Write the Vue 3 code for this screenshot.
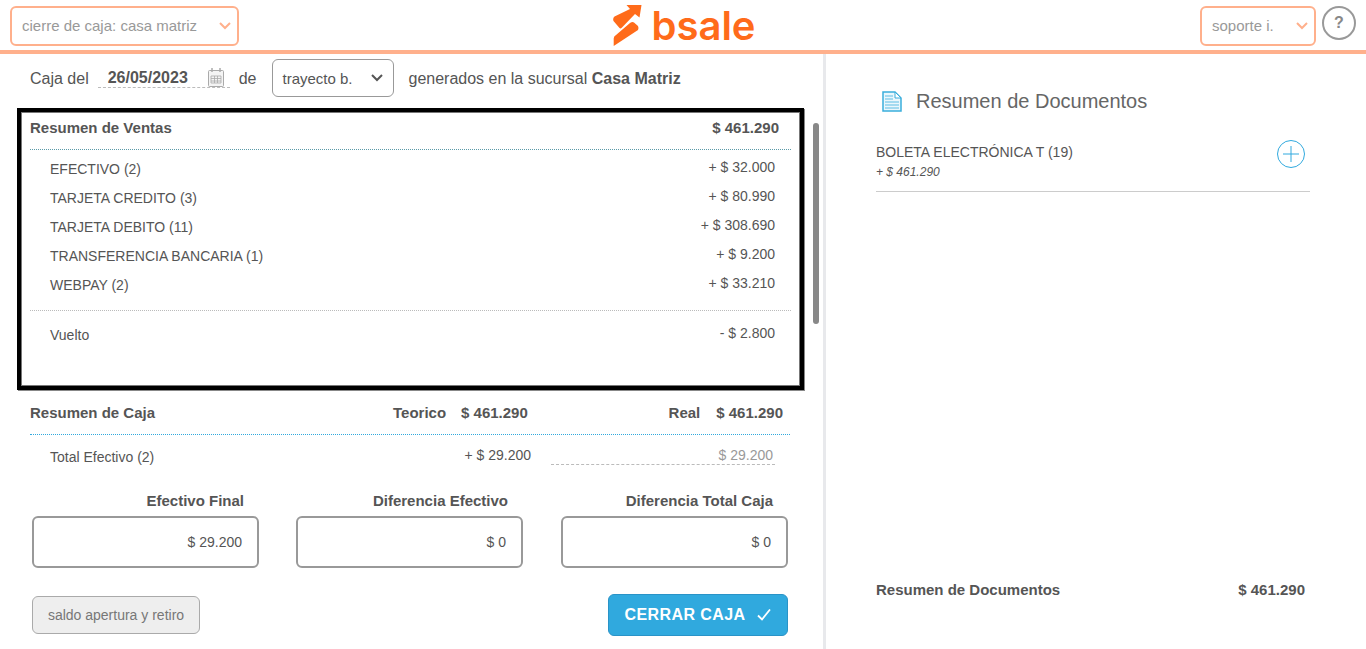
<script setup>
const ventas = [
  { name: 'EFECTIVO (2)', value: '+ $ 32.000' },
  { name: 'TARJETA CREDITO (3)', value: '+ $ 80.990' },
  { name: 'TARJETA DEBITO (11)', value: '+ $ 308.690' },
  { name: 'TRANSFERENCIA BANCARIA (1)', value: '+ $ 9.200' },
  { name: 'WEBPAY (2)', value: '+ $ 33.210' },
]

const totales = [
  { label: 'Efectivo Final', value: '$ 29.200' },
  { label: 'Diferencia Efectivo', value: '$ 0' },
  { label: 'Diferencia Total Caja', value: '$ 0' },
]
</script>

<template>
  <div class="page">
    <header class="topbar">
      <div class="top-select wide">
        <span>cierre de caja: casa matriz</span>
        <svg class="chev" width="12" height="8" viewBox="0 0 12 8"><path d="M1 1l5 5 5-5" fill="none" stroke="#ffb08c" stroke-width="2"/></svg>
      </div>
      <div class="logo">
        <svg class="logo-mark" width="30" height="42" viewBox="0 0 30 42">
          <path d="M13.500 0H28.500L26.500 12.500 22 9 9 22.500Q7.500 24 6.500 23L.5 16Q-.5 13 1.500 11.500L17 4Z" fill="#ff6b1a"/>
          <path d="M17 18Q19.500 16.500 21 17.500L25 21Q26 23 25 25L.7 41V33.500Q.7 31 3 30Z" fill="#ff6b1a"/>
        </svg>
        <span class="logo-text">bsale</span>
      </div>
      <div class="top-right">
        <div class="top-select narrow">
          <span>soporte i.</span>
          <svg class="chev" width="12" height="8" viewBox="0 0 12 8"><path d="M1 1l5 5 5-5" fill="none" stroke="#ffb08c" stroke-width="2"/></svg>
        </div>
        <div class="help">?</div>
      </div>
    </header>

    <div class="content">
      <main class="left">
        <div class="thumb"></div>
        <div class="filter">
          <span>Caja del</span>
          <div class="date">
            <b>26/05/2023</b>
            <svg width="16" height="19" viewBox="0 0 16 19">
              <rect x=".5" y="2.500" width="15" height="16" rx="1" fill="#f4f4f4" stroke="#aaa"/>
              <path d="M4 0v4M12 0v4" stroke="#aaa" stroke-width="1.500"/>
              <path d="M3 8h10v7H3zM3 10.500h10M3 13h10M6.500 8v7M9.500 8v7" fill="none" stroke="#aaa" stroke-width=".8"/>
            </svg>
          </div>
          <span class="de">de</span>
          <div class="filter-select">
            <span>trayecto b.</span>
            <svg width="12" height="8" viewBox="0 0 12 8"><path d="M1 1l5 5 5-5" fill="none" stroke="#555" stroke-width="2"/></svg>
          </div>
          <span class="sucursal">generados en la sucursal <b>Casa Matriz</b></span>
        </div>

        <section class="ventas">
          <div class="ventas-head">
            <b>Resumen de Ventas</b>
            <b>$ 461.290</b>
          </div>
          <div v-for="v in ventas" :key="v.name" class="row">
            <span class="row-name">{{ v.name }}</span>
            <span class="row-value">{{ v.value }}</span>
          </div>
          <div class="row vuelto">
            <span class="row-name">Vuelto</span>
            <span class="row-value">- $ 2.800</span>
          </div>
        </section>

        <section class="caja">
          <div class="caja-head">
            <b class="caja-title">Resumen de Caja</b>
            <b class="teorico">Teorico</b>
            <b>$ 461.290</b>
            <b class="real">Real</b>
            <b>$ 461.290</b>
          </div>
          <div class="caja-row">
            <span class="caja-name">Total Efectivo (2)</span>
            <span class="caja-teorico">+ $ 29.200</span>
            <span class="caja-real">$ 29.200</span>
          </div>
        </section>

        <div class="totales">
          <div v-for="t in totales" :key="t.label" class="total">
            <b>{{ t.label }}</b>
            <div class="total-box">{{ t.value }}</div>
          </div>
        </div>

        <div class="actions">
          <button class="btn-saldo">saldo apertura y retiro</button>
          <button class="btn-cerrar">
            CERRAR CAJA
            <svg width="14" height="12" viewBox="0 0 14 12"><path d="M1 6.500l4 4 8-10" fill="none" stroke="#fff" stroke-width="1.800"/></svg>
          </button>
        </div>
      </main>

      <aside class="right">
        <div class="right-title">
          <svg width="20" height="21" viewBox="0 0 20 21">
            <path d="M1 1h12l6 6v13H1z" fill="#eaf7fc" stroke="#3aaedc" stroke-width="1.500"/>
            <path d="M13 1v6h6z" fill="#fff" stroke="#3aaedc"/>
            <path d="M3 5h8M3 8h8M3 11h14M3 14h14M3 17h14" stroke="#5cbde4" stroke-width="1.200"/>
          </svg>
          <span>Resumen de Documentos</span>
        </div>
        <div class="doc">
          <div>
            <div class="doc-name">BOLETA ELECTRÓNICA T (19)</div>
            <div class="doc-value">+ $ 461.290</div>
          </div>
          <svg class="plus" width="28" height="28" viewBox="0 0 28 28">
            <circle cx="14" cy="14" r="13.500" fill="none" stroke="#30a9de"/>
            <path d="M14 6v16M6 14h16" stroke="#30a9de"/>
          </svg>
        </div>
        <div class="right-foot">
          <b>Resumen de Documentos</b>
          <b>$ 461.290</b>
        </div>
      </aside>
    </div>
  </div>
</template>

<style>
html, body {
  margin: 0;
  background: #fff;
  overflow: hidden;
}
</style>

<style scoped>
.page {
  height: 649px;
  display: flex;
  flex-direction: column;
  font-family: "Liberation Sans", Arial, sans-serif;
  font-size: 14px;
  color: #555;
  box-sizing: border-box;
}

b {
  font-size: 15px;
}

.topbar {
  height: 54px;
  box-sizing: border-box;
  border-bottom: 4px solid #ffb08c;
  padding: 6px 10px 0;
  display: flex;
  justify-content: space-between;
  align-items: flex-start;
}

.top-select {
  height: 40px;
  box-sizing: border-box;
  border: 2px solid #ffb08c;
  border-radius: 6px;
  padding: 0 6px 2px 10px;
  display: flex;
  align-items: center;
  justify-content: space-between;
  color: #999;
  font-size: 15px;
}
.top-select.wide { width: 229px; }
.top-select.narrow { width: 116px; }
.chev { margin-top: 2px; }

.logo {
  width: 142px;
  margin-right: 72px;
  display: flex;
  align-items: center;
  gap: 9px;
  margin-top: -2px;
}
.logo-mark { flex: none; }
.logo-text {
  font-family: "Inter", sans-serif;
  font-weight: 600;
  font-size: 40px;
  line-height: 44px;
  color: #ff6b1a;
}

.top-right {
  display: flex;
  gap: 6px;
}
.help {
  width: 34px;
  height: 34px;
  box-sizing: border-box;
  border: 2px solid #999;
  border-radius: 50%;
  display: flex;
  align-items: center;
  justify-content: center;
  font-weight: 700;
  font-size: 16px;
  color: #888;
}

.content {
  flex: 1;
  display: flex;
  min-height: 0;
}

.left {
  width: 823px;
  position: relative;
}

.thumb {
  position: absolute;
  left: 813px;
  top: 69px;
  width: 6px;
  height: 201px;
  background: #888;
  border-radius: 3px;
}

.filter {
  height: 54px;
  padding: 0 0 6px 30px;
  display: flex;
  align-items: center;
  font-size: 16px;
  box-sizing: border-box;
}
.filter > span { padding-top: 2px; }
.date {
  margin-left: 9px;
  width: 132px;
  height: 20px;
  box-sizing: border-box;
  border-bottom: 1px dashed #bbb;
  padding: 0 6px 0 10px;
  display: flex;
  align-items: center;
  justify-content: space-between;
}
.date b {
  font-size: 16px;
}
.de { margin-left: 9px; }
.filter-select {
  margin-left: 15px;
  width: 122px;
  height: 38px;
  box-sizing: border-box;
  border: 1px solid #999;
  border-radius: 6px;
  padding: 0 10px;
  display: flex;
  align-items: center;
  justify-content: space-between;
  font-size: 15px;
}
.sucursal { margin-left: 15px; }
.sucursal b { font-size: 16px; }

.ventas {
  margin-left: 17px;
  width: 787px;
  height: 282px;
  box-sizing: border-box;
  border: 4px solid #000;
  outline: 1px solid #777;
  outline-offset: -5px;
  box-shadow: 1px 1px 0 #888;
  padding: 0 9px;
}
.ventas-head {
  height: 38px;
  box-sizing: border-box;
  border-bottom: 1px dotted #5a9aa8;
  display: flex;
  justify-content: space-between;
  align-items: center;
  padding: 0 12px 7px 0;
  margin-bottom: 4px;
}
.row {
  height: 29px;
  display: flex;
  justify-content: space-between;
  padding: 0 16px 0 20px;
}
.row-name { padding-top: 7px; }
.row-value { padding-top: 5px; }
.vuelto {
  margin-top: 11px;
  height: 40px;
  border-top: 1px dotted #bbb;
  padding-top: 8px;
}
.vuelto .row-name { padding-top: 8px; }
.vuelto .row-value { padding-top: 6px; }

.caja {
  margin: 1px 0 0 30px;
  width: 760px;
}
.caja-head {
  height: 44px;
  box-sizing: border-box;
  border-bottom: 1px dotted #30a9de;
  display: flex;
  align-items: center;
  padding: 0 7px 0 0;
}
.caja-title { width: 363px; }
.teorico { margin-right: 15px; }
.real { margin-right: 16px; margin-left: auto; }
.caja-row {
  height: 38px;
  display: flex;
  box-sizing: border-box;
  padding: 12px 15px 0 20px;
}
.caja-name { width: 381px; padding-top: 2px; }
.caja-teorico { width: 100px; text-align: right; }
.caja-real {
  margin-left: 20px;
  width: 224px;
  height: 18px;
  box-sizing: border-box;
  border-bottom: 1px dashed #bbb;
  text-align: right;
  color: #999;
  padding-right: 2px;
}

.totales {
  margin: 20px 0 0 32px;
  display: flex;
  gap: 37px;
}
.total {
  width: 227px;
  display: flex;
  flex-direction: column;
  align-items: flex-end;
}
.total:last-child { margin-left: 1px; }
.total b {
  height: 16px;
  line-height: 16px;
  padding-right: 15px;
  margin-bottom: 7px;
}
.total-box {
  width: 100%;
  height: 52px;
  box-sizing: border-box;
  border: 2px solid #999;
  border-radius: 6px;
  display: flex;
  align-items: center;
  justify-content: flex-end;
  padding-right: 15px;
}

.actions {
  margin: 26px 0 0 32px;
  width: 756px;
  display: flex;
  justify-content: space-between;
  align-items: center;
}
.btn-saldo {
  width: 168px;
  height: 38px;
  border: 1px solid #aaa;
  border-radius: 6px;
  background: #eee;
  color: #777;
  font-family: inherit;
  font-size: 14px;
  padding: 0;
}
.btn-cerrar {
  width: 180px;
  height: 42px;
  border: 1px solid #2a93c7;
  border-radius: 6px;
  background: #30a9de;
  color: #fff;
  font-family: inherit;
  font-weight: 700;
  font-size: 16px;
  letter-spacing: 0.4px;
  display: flex;
  align-items: center;
  justify-content: center;
  gap: 12px;
  padding: 0;
}

.right {
  flex: 1;
  border-left: 3px solid #e8e9ec;
  display: flex;
  flex-direction: column;
  padding: 36px 56px 0 50px;
  box-sizing: border-box;
}
.right-title {
  display: flex;
  align-items: center;
  gap: 14px;
  margin-left: 6px;
  font-size: 20px;
  color: #666;
  height: 22px;
}
.doc {
  margin-top: 31px;
  height: 49px;
  box-sizing: border-box;
  border-bottom: 1px solid #ccc;
  display: flex;
  justify-content: space-between;
  align-items: flex-start;
  padding-right: 5px;
}
.doc-name { height: 19px; line-height: 19px; margin-bottom: 2px; }
.doc-value {
  font-style: italic;
  font-size: 12px;
  line-height: 16px;
}
.plus { margin-top: -3px; }
.right-foot {
  margin-top: 389px;
  display: flex;
  justify-content: space-between;
  padding-right: 5px;
}
</style>
